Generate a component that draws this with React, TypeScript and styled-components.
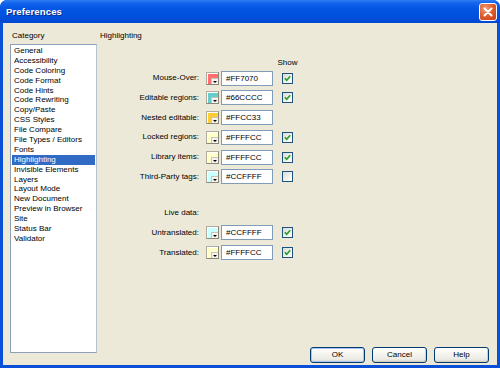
import React from "react";
import styled, { createGlobalStyle } from "styled-components";

const Global = createGlobalStyle`
  html, body { margin: 0; padding: 0; background: #ffffff; }
  body { font-family: "Liberation Sans", Arial, sans-serif; }
  * { box-sizing: border-box; }
`;

const Window = styled.div`
  width: 500px;
  height: 368px;
  display: flex;
  flex-direction: column;
  overflow: hidden;
  border-radius: 7px 7px 0 0;
  background: #0a4fd8;
  font-family: "Liberation Sans", Arial, sans-serif;
  font-size: 8px;
  color: #000;
`;

const TitleBar = styled.div`
  height: 23px;
  flex: none;
  display: flex;
  align-items: center;
  justify-content: space-between;
  padding: 0 3px 0 6px;
  background: linear-gradient(
    180deg,
    #2f7cf5 0%,
    #1466ec 12%,
    #0556e4 35%,
    #0150de 70%,
    #0048d0 100%
  );
`;

const Title = styled.span`
  color: #ffffff;
  font-weight: bold;
  font-size: 9.6px;
  text-shadow: 1px 1px 0 #0a2a8a;
  letter-spacing: 0.1px;
`;

const CloseButton = styled.div`
  width: 18px;
  height: 18px;
  border: 1px solid #ffffff;
  border-radius: 3px;
  background: radial-gradient(circle at 35% 30%, #f0a080 0%, #e0602e 45%, #c83a14 100%);
  display: flex;
  align-items: center;
  justify-content: center;
`;

const Body = styled.div`
  flex: 1;
  display: flex;
  background: #ece9d8;
  margin: 0 3px 3px 3px;
  min-height: 0;
`;

const LeftPane = styled.div`
  width: 94px;
  flex: none;
  display: flex;
  flex-direction: column;
  padding: 8px 0 12px 7px;
`;

const PaneLabel = styled.div<{ $indent?: number }>`
  height: 10px;
  line-height: 10px;
  padding-left: ${(p) => p.$indent ?? 0}px;
  white-space: nowrap;
`;

const ListBox = styled.div`
  margin-top: 3px;
  flex: 1;
  background: #ffffff;
  border: 1px solid #8f9fb8;
  border-right-color: #b8c4d4;
  padding: 1px 1px;
`;

const ListItem = styled.div<{ $selected?: boolean }>`
  height: 9.9px;
  line-height: 9.9px;
  padding-left: 2px;
  white-space: nowrap;
  background: ${(p) => (p.$selected ? "#316ac5" : "transparent")};
  color: ${(p) => (p.$selected ? "#ffffff" : "#000000")};
`;

const RightPane = styled.div`
  flex: 1;
  display: flex;
  flex-direction: column;
  padding: 8px 8px 2px 3px;
`;

const Settings = styled.div`
  margin-top: 17px;
  display: flex;
  flex-direction: column;
  gap: 4.8px;
`;

const Row = styled.div<{ $header?: boolean; $spaced?: number }>`
  display: grid;
  grid-template-columns: 106px 15px 61px 11px;
  align-items: center;
  height: ${(p) => (p.$header ? 10 : 15)}px;
  margin-top: ${(p) => p.$spaced ?? 0}px;
  margin-bottom: ${(p) => (p.$header ? -2.3 : 0)}px;
`;

const Label = styled.div`
  text-align: right;
  padding-right: 7px;
  white-space: nowrap;
  line-height: 10px;
`;

const ShowHeader = styled.div`
  grid-column: 4;
  justify-self: center;
  line-height: 10px;
  white-space: nowrap;
`;

const Swatch = styled.div<{ $color: string }>`
  position: relative;
  width: 13px;
  height: 13px;
  border: 1px solid #b0ad9f;
  border-right-color: #8a877a;
  border-bottom-color: #8a877a;
  background: ${(p) => p.$color};
  box-shadow: inset 1px 1px 0 #ffffff;
  &::after {
    content: "";
    position: absolute;
    right: 0;
    bottom: 0;
    width: 6px;
    height: 5px;
    background: #f4f3ee;
    border-left: 1px solid #c9c6b8;
    border-top: 1px solid #c9c6b8;
  }
  &::before {
    content: "";
    position: absolute;
    right: 1px;
    bottom: 1px;
    width: 0;
    height: 0;
    border-left: 2px solid transparent;
    border-right: 2px solid transparent;
    border-top: 2px solid #000;
    z-index: 1;
  }
`;

const HexInput = styled.div`
  width: 52px;
  height: 15px;
  border: 1px solid #7f9db9;
  background: #ffffff;
  padding-left: 4px;
  line-height: 13px;
  white-space: nowrap;
`;

const CheckBox = styled.div`
  width: 11px;
  height: 11px;
  border: 1px solid #1c5180;
  background: linear-gradient(135deg, #dcdcd5 0%, #f6f6f3 70%, #ffffff 100%);
  display: flex;
  align-items: center;
  justify-content: center;
`;

const Spacer = styled.div`
  flex: 1;
`;

const ButtonBar = styled.div`
  display: flex;
  justify-content: flex-end;
  gap: 7px;
`;

const Button = styled.div<{ $default?: boolean }>`
  width: 55px;
  height: 16px;
  border: 1px solid #003c74;
  border-radius: 3px;
  background: linear-gradient(180deg, #ffffff 0%, #f6f5f0 40%, #ecebe4 80%, #d8d3c6 100%);
  box-shadow: ${(p) =>
    p.$default ? "inset 0 0 0 1px #a8c4f0" : "inset -1px -1px 0 #d4cfc0"};
  display: flex;
  align-items: center;
  justify-content: center;
  line-height: 10px;
`;

type Item = { label: string; color?: string; show?: boolean | null; spaced?: number };

const items: Item[] = [
  { label: "Mouse-Over:", color: "#FF7070", show: true },
  { label: "Editable regions:", color: "#66CCCC", show: true },
  { label: "Nested editable:", color: "#FFCC33", show: null },
  { label: "Locked regions:", color: "#FFFFCC", show: true },
  { label: "Library items:", color: "#FFFFCC", show: true },
  { label: "Third-Party tags:", color: "#CCFFFF", show: false },
  { label: "Live data:", spaced: 16.2 },
  { label: "Untranslated:", color: "#CCFFFF", show: true },
  { label: "Translated:", color: "#FFFFCC", show: true },
];

const categories = [
  "General",
  "Accessibility",
  "Code Coloring",
  "Code Format",
  "Code Hints",
  "Code Rewriting",
  "Copy/Paste",
  "CSS Styles",
  "File Compare",
  "File Types / Editors",
  "Fonts",
  "Highlighting",
  "Invisible Elements",
  "Layers",
  "Layout Mode",
  "New Document",
  "Preview in Browser",
  "Site",
  "Status Bar",
  "Validator",
];

const Check = () => (
  <svg width="7" height="7" viewBox="0 0 7 7">
    <path d="M0.8 3.2 L2.7 5.2 L6.2 1.2" fill="none" stroke="#21a121" strokeWidth="1.6" />
  </svg>
);

const CloseX = () => (
  <svg width="10" height="10" viewBox="0 0 10 10">
    <path d="M1.5 1.5 L8.5 8.5 M8.5 1.5 L1.5 8.5" stroke="#ffffff" strokeWidth="2" strokeLinecap="round" />
  </svg>
);

export default function App() {
  return (
    <>
      <Global />
      <Window>
        <TitleBar>
          <Title>Preferences</Title>
          <CloseButton>
            <CloseX />
          </CloseButton>
        </TitleBar>
        <Body>
          <LeftPane>
            <PaneLabel $indent={2}>Category</PaneLabel>
            <ListBox>
              {categories.map((c) => (
                <ListItem key={c} $selected={c === "Highlighting"}>
                  {c}
                </ListItem>
              ))}
            </ListBox>
          </LeftPane>
          <RightPane>
            <PaneLabel>Highlighting</PaneLabel>
            <Settings>
              <Row $header>
                <ShowHeader>Show</ShowHeader>
              </Row>
              {items.map((it) => (
                <Row key={it.label} $spaced={it.spaced}>
                  <Label>{it.label}</Label>
                  {it.color && <Swatch $color={it.color} />}
                  {it.color && <HexInput>{it.color}</HexInput>}
                  {it.show !== undefined && it.show !== null && (
                    <CheckBox>{it.show && <Check />}</CheckBox>
                  )}
                </Row>
              ))}
            </Settings>
            <Spacer />
            <ButtonBar>
              <Button $default>OK</Button>
              <Button>Cancel</Button>
              <Button>Help</Button>
            </ButtonBar>
          </RightPane>
        </Body>
      </Window>
    </>
  );
}
